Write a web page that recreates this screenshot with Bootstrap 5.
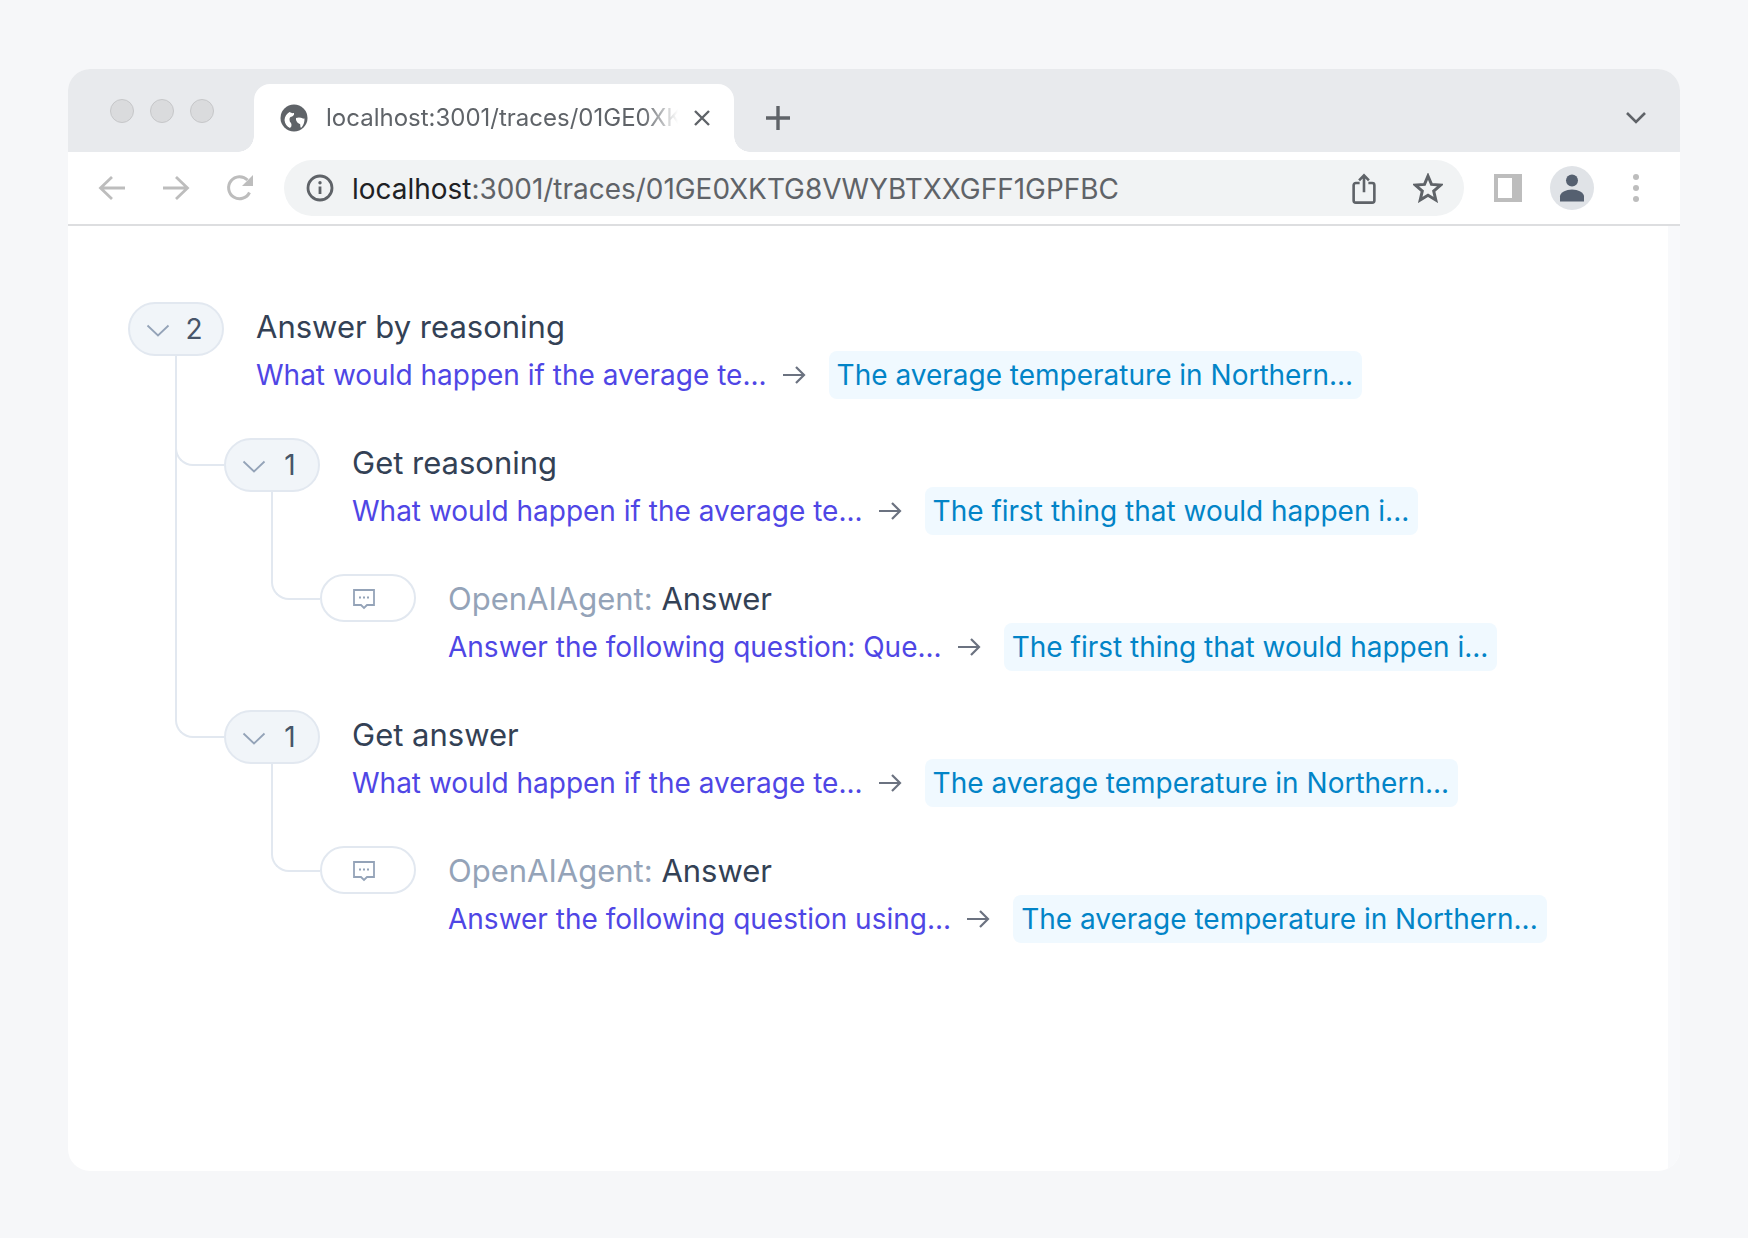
<!DOCTYPE html>
<html lang="en">
<head>
    <meta charset="UTF-8">
    <title>Trace</title>
    <meta name="viewport" content="width=device-width, initial-scale=1">
    <link href="https://cdn.jsdelivr.net/npm/bootstrap@5.3.0/dist/css/bootstrap.min.css" rel="stylesheet">
    <style>
        html, body { height: 100%; }
        body { background: #f6f7f9; padding: 69px 68px 67px; font-family: Inter, "Liberation Sans", sans-serif; }
        .win { height: 1102px; border-radius: 22px; overflow: hidden; background: #fff; }
        .tabstrip { height: 83px; background: #e8eaed; padding: 0 24px 0 42px; }
        .traffic { gap: 16px; margin-top: 30px; margin-right: 40px; align-self: flex-start; }
        .traffic i { display: block; width: 24px; height: 24px; border-radius: 50%; background: #dadbdd; border: 1px solid #c6c7c9; }
        .tabx { width: 480px; height: 68px; background: #fff; border-radius: 16px 16px 0 0; padding: 0 22px 0 26px; position: relative; align-self: flex-end; }
        .tabx::before, .tabx::after { content: ""; position: absolute; bottom: 0; width: 16px; height: 16px; }
        .tabx::before { left: -16px; background: radial-gradient(circle at 0 0, transparent 15.5px, #fff 16px); }
        .tabx::after { right: -16px; background: radial-gradient(circle at 100% 0, transparent 15.5px, #fff 16px); }
        .tabtitle { font-size: 24px; color: #5f6368; white-space: nowrap; overflow: hidden; width: 352px; margin-left: 18px; line-height: 36px; -webkit-mask-image: linear-gradient(to right, #000 90%, transparent 100%); mask-image: linear-gradient(to right, #000 90%, transparent 100%); }
        .ibox { width: 40px; height: 40px; flex: none; }
        .stripbtn { margin-bottom: 14px; align-self: flex-end; }
        .toolbar { height: 74px; padding: 0 24px; gap: 24px; border-bottom: 2px solid #dddee0; }
        .addr { height: 56px; border-radius: 28px; background: #f1f3f4; padding: 0 16px; gap: 24px; }
        .urltxt { font-size: 27.95px; color: #5f6368; white-space: nowrap; margin-left: -12px; line-height: 56px; padding-top: 1px; }
        .urltxt b { font-weight: 400; color: #202124; }
        .avatar { border-radius: 50%; background: #e0e3e7; width: 44px; height: 44px; }
        .pagewrap { min-height: 0; }
        .scrollstrip { width: 12px; background: #f8f9fb; flex: none; }
        .tracearea { padding: 76px 0 0 60px; }
        .tracerow { height: 96px; margin-bottom: 40px; gap: 32px; }
        .pillx { width: 96px; height: 54px; flex: none; border: 2px solid #e2e8f0; border-radius: 27px; background: #f1f5f9; color: #475569; font-size: 28px; position: relative; }
        .pillx svg { position: absolute; left: 16px; top: 20px; }
        .pillx span { position: absolute; left: 64px; top: 50%; transform: translate(-50%, -50%); line-height: 1; }
        .pillx.leafpill { height: 48px; background: #fff; }
        .pillx.leafpill svg { left: 30px; top: 11px; }
        .tname { font-size: 31px; line-height: 48px; color: #334155; white-space: nowrap; padding-top: 1px; }
        .tname em { font-style: normal; color: #94a3b8; }
        .flowline { height: 48px; font-size: 28px; white-space: nowrap; }
        .flowin { color: #4f46e5; margin-right: -1px; }
        .flowarrow { margin: 0 23px 0 16px; }
        .flowout { color: #0284c7; background: #f0f9ff; border-radius: 8px; padding: 1px 9px 0 8px; line-height: 47px; }
        .kids { list-style: none; margin: 0 0 0 47px; padding: 0 0 0 49px; }
        .kids > li { position: relative; }
        .kids > li::before { content: ""; position: absolute; left: -49px; top: -82px; width: 49px; height: 110px; border-left: 2px solid #e2e8f0; border-bottom: 2px solid #e2e8f0; border-bottom-left-radius: 18px; }
        .kids > li:not(:last-child)::after { content: ""; position: absolute; left: -49px; top: 0; bottom: 0; width: 2px; background: #e2e8f0; }
        .kids > li.leafnode::before { height: 108px; }
    </style>
</head>
<body>

<div class="win d-flex flex-column">
    <div class="tabstrip d-flex align-items-center flex-none">
        <div class="traffic d-flex"><i></i><i></i><i></i></div>
        <div class="tabx d-flex align-items-center">
            <svg width="28" height="28" viewBox="0 0 28 28" class="flex-shrink-0">
                <circle cx="14" cy="14" r="13.500" fill="#5f6368"/>
                <path d="M4.500 16c.2-3.500 2.300-6.500 5-8 1.500 1 3 1.400 4.500 1 .5 2-1 3.500-3.500 4-1.500 1-1 3-.5 5 1.500 1 1.800 2.500 1.300 4.500l-1.300 1.500C7 22.800 4.800 19.800 4.500 16z" fill="#fff"/>
                <path d="M16 14c2.500-1 5-.5 7 .5.500.2 1 .2 1.500 0 .2 3.500-1 7-3.500 9.500-1-1.500-.5-3-1-4-2-.5-4.500-3-4-6z" fill="#fff"/>
            </svg>
            <div class="tabtitle">localhost:3001/traces/01GE0XKTG8VWYBTXXGFF1GPFBC</div>
            <svg width="20" height="20" viewBox="0 0 20 20" class="ms-auto flex-shrink-0"><path d="M3 3l14 14M17 3L3 17" stroke="#5f6368" stroke-width="2.400" fill="none"/></svg>
        </div>
        <div class="ibox stripbtn d-flex align-items-center justify-content-center ms-4">
            <svg width="26" height="26" viewBox="0 0 26 26"><path d="M13 1v24M1 13h24" stroke="#5f6368" stroke-width="3.400"/></svg>
        </div>
        <div class="ibox stripbtn d-flex align-items-center justify-content-center ms-auto">
            <svg width="22" height="14" viewBox="0 0 22 14"><path d="M2 2l9 9 9-9" stroke="#5f6368" stroke-width="2.600" fill="none"/></svg>
        </div>
    </div>

    <div class="toolbar d-flex align-items-center">
        <div class="ibox d-flex align-items-center justify-content-center">
            <svg width="28" height="26" viewBox="0 0 28 26"><path d="M27 13H3M14 2L2.500 13 14 24" stroke="#bdbdbd" stroke-width="2.800" fill="none"/></svg>
        </div>
        <div class="ibox d-flex align-items-center justify-content-center">
            <svg width="28" height="26" viewBox="0 0 28 26"><path d="M1 13h24M14 2l11.500 11L14 24" stroke="#bdbdbd" stroke-width="2.800" fill="none"/></svg>
        </div>
        <div class="ibox d-flex align-items-center justify-content-center">
            <svg width="28" height="28" viewBox="0 0 28 28"><path d="M23.500 18.500A11 11 0 1 1 21.500 6" stroke="#bdbdbd" stroke-width="3" fill="none"/><path d="M27 1v11H16z" fill="#bdbdbd"/></svg>
        </div>
        <div class="addr d-flex align-items-center flex-grow-1">
            <div class="ibox d-flex align-items-center justify-content-center">
                <svg width="28" height="28" viewBox="0 0 28 28"><circle cx="14" cy="14" r="12" fill="none" stroke="#5f6368" stroke-width="2.800"/><path d="M14 12.500V20" stroke="#5f6368" stroke-width="2.800"/><circle cx="14" cy="8.800" r="1.700" fill="#5f6368"/></svg>
            </div>
            <div class="urltxt"><b>localhost</b>:3001/traces/01GE0XKTG8VWYBTXXGFF1GPFBC</div>
            <div class="ibox d-flex align-items-center justify-content-center ms-auto">
                <svg width="24" height="31" viewBox="0 0 22 28"><path d="M7 9H3.500a2 2 0 0 0-2 2v14a2 2 0 0 0 2 2h15a2 2 0 0 0 2-2V11a2 2 0 0 0-2-2H15M11 17.500V2M6.500 6.500L11 2l4.500 4.500" stroke="#5f6368" stroke-width="2.400" fill="none"/></svg>
            </div>
            <div class="ibox d-flex align-items-center justify-content-center">
                <svg width="30" height="30" viewBox="0 0 30 30"><path d="M15 3l3.500 8.400 9.100.7-6.900 6 2.100 8.900-7.800-4.700L7.200 27l2.100-8.900-6.900-6 9.100-.7z" stroke="#5f6368" stroke-width="3" fill="none"/></svg>
            </div>
        </div>
        <div class="ibox d-flex align-items-center justify-content-center">
            <svg width="28" height="28" viewBox="0 0 28 28"><path fill="#bdbdbd" d="M0 0h28v28H0z"/><path fill="#fff" d="M4 4h14v20H4z"/></svg>
        </div>
        <div class="ibox d-flex align-items-center justify-content-center">
            <div class="avatar flex-shrink-0 d-flex align-items-center justify-content-center">
                <svg width="26" height="28" viewBox="0 0 26 28"><circle cx="13" cy="6.500" r="6" fill="#556070"/><path d="M1 27.500v-5c0-4 6-7 12-7s12 3 12 7v5z" fill="#556070"/></svg>
            </div>
        </div>
        <div class="ibox d-flex align-items-center justify-content-center">
            <svg width="8" height="30" viewBox="0 0 8 30"><circle cx="4" cy="4" r="3" fill="#bdbdbd"/><circle cx="4" cy="15" r="3" fill="#bdbdbd"/><circle cx="4" cy="26" r="3" fill="#bdbdbd"/></svg>
        </div>
    </div>

    <div class="pagewrap d-flex flex-grow-1">
        <div class="tracearea flex-grow-1">
            <div class="tracerow d-flex">
                <div class="pillx"><svg width="24" height="14" viewBox="0 0 24 14"><path d="M1.500 1.500L12 11.500 22.500 1.500" stroke="#94a3b8" stroke-width="1.800" fill="none"/></svg><span>2</span></div>
                <div>
                    <div class="tname">Answer by reasoning</div>
                    <div class="flowline d-flex align-items-center">
                        <span class="flowin">What would happen if the average te...</span>
                        <svg class="flowarrow" width="24" height="20" viewBox="0 0 24 20"><path d="M1 10h21M14 2l8 8-8 8" stroke="#6b7280" stroke-width="2.200" fill="none"/></svg>
                        <span class="flowout">The average temperature in Northern...</span>
                    </div>
                </div>
            </div>
            <ul class="kids">
                <li>
                    <div class="tracerow d-flex">
                        <div class="pillx"><svg width="24" height="14" viewBox="0 0 24 14"><path d="M1.500 1.500L12 11.500 22.500 1.500" stroke="#94a3b8" stroke-width="1.800" fill="none"/></svg><span>1</span></div>
                        <div>
                            <div class="tname">Get reasoning</div>
                            <div class="flowline d-flex align-items-center">
                                <span class="flowin">What would happen if the average te...</span>
                                <svg class="flowarrow" width="24" height="20" viewBox="0 0 24 20"><path d="M1 10h21M14 2l8 8-8 8" stroke="#6b7280" stroke-width="2.200" fill="none"/></svg>
                                <span class="flowout">The first thing that would happen i...</span>
                            </div>
                        </div>
                    </div>
                    <ul class="kids">
                        <li class="leafnode">
                            <div class="tracerow d-flex">
                                <div class="pillx leafpill"><svg width="24" height="24" viewBox="0 0 24 24"><path d="M2 3h20v15h-7l-3 3-3-3H2z" stroke="#94a3b8" stroke-width="1.800" fill="none"/><path d="M7 10.500h2M11 10.500h2M15 10.500h2" stroke="#94a3b8" stroke-width="2"/></svg></div>
                                <div>
                                    <div class="tname"><em>OpenAIAgent:</em> Answer</div>
                                    <div class="flowline d-flex align-items-center">
                                        <span class="flowin">Answer the following question: Que...</span>
                                        <svg class="flowarrow" width="24" height="20" viewBox="0 0 24 20"><path d="M1 10h21M14 2l8 8-8 8" stroke="#6b7280" stroke-width="2.200" fill="none"/></svg>
                                        <span class="flowout">The first thing that would happen i...</span>
                                    </div>
                                </div>
                            </div>
                        </li>
                    </ul>
                </li>
                <li>
                    <div class="tracerow d-flex">
                        <div class="pillx"><svg width="24" height="14" viewBox="0 0 24 14"><path d="M1.500 1.500L12 11.500 22.500 1.500" stroke="#94a3b8" stroke-width="1.800" fill="none"/></svg><span>1</span></div>
                        <div>
                            <div class="tname">Get answer</div>
                            <div class="flowline d-flex align-items-center">
                                <span class="flowin">What would happen if the average te...</span>
                                <svg class="flowarrow" width="24" height="20" viewBox="0 0 24 20"><path d="M1 10h21M14 2l8 8-8 8" stroke="#6b7280" stroke-width="2.200" fill="none"/></svg>
                                <span class="flowout">The average temperature in Northern...</span>
                            </div>
                        </div>
                    </div>
                    <ul class="kids">
                        <li class="leafnode">
                            <div class="tracerow d-flex">
                                <div class="pillx leafpill"><svg width="24" height="24" viewBox="0 0 24 24"><path d="M2 3h20v15h-7l-3 3-3-3H2z" stroke="#94a3b8" stroke-width="1.800" fill="none"/><path d="M7 10.500h2M11 10.500h2M15 10.500h2" stroke="#94a3b8" stroke-width="2"/></svg></div>
                                <div>
                                    <div class="tname"><em>OpenAIAgent:</em> Answer</div>
                                    <div class="flowline d-flex align-items-center">
                                        <span class="flowin">Answer the following question using...</span>
                                        <svg class="flowarrow" width="24" height="20" viewBox="0 0 24 20"><path d="M1 10h21M14 2l8 8-8 8" stroke="#6b7280" stroke-width="2.200" fill="none"/></svg>
                                        <span class="flowout">The average temperature in Northern...</span>
                                    </div>
                                </div>
                            </div>
                        </li>
                    </ul>
                </li>
            </ul>
        </div>
        <div class="scrollstrip"></div>
    </div>
</div>

<script src="https://cdn.jsdelivr.net/npm/bootstrap@5.3.0/dist/js/bootstrap.bundle.min.js"></script>
</body>
</html>
